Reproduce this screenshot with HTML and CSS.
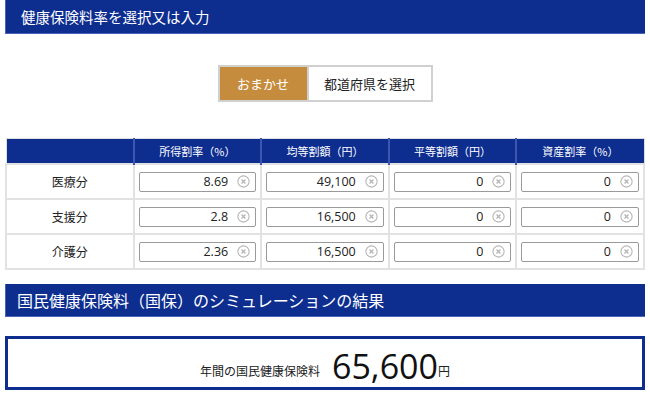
FILE: index.html
```html
<!DOCTYPE html>
<html>
<head>
    <meta charset="utf-8">
    <title>国民健康保険料シミュレーション</title>
    <link rel="stylesheet" href="styles.css">
</head>
<body>
    <h2 class="section-title">健康保険料率を選択又は入力</h2>

    <div class="mode-switch">
        <button class="mode-btn active">おまかせ</button>
        <button class="mode-btn">都道府県を選択</button>
    </div>

    <table class="rate-table">
        <thead>
            <tr>
                <th></th>
                <th>所得割率（%）</th>
                <th>均等割額（円）</th>
                <th>平等割額（円）</th>
                <th>資産割率（%）</th>
            </tr>
        </thead>
        <tbody id="rateBody">
            <!-- rows are filled in by the script below -->
        </tbody>
    </table>

    <h2 class="section-title result-title">国民健康保険料（国保）のシミュレーションの結果</h2>

    <div class="result-box">
        <span class="result-label">年間の国民健康保険料</span>
        <span class="result-value">65,600</span><span class="result-unit">円</span>
    </div>

    <script>
        var rows = [
            { name: '医療分', values: ['8.69', '49,100', '0', '0'] },
            { name: '支援分', values: ['2.8', '16,500', '0', '0'] },
            { name: '介護分', values: ['2.36', '16,500', '0', '0'] }
        ];

        var clearIcon = '<svg class="clear-icon" viewBox="0 0 12 12" width="13" height="13">' +
                        '<circle cx="6" cy="6" r="5.2" fill="none" stroke="#b5b5b5" stroke-width="1"/>' +
                        '<path d="M4.2 4.2 L7.8 7.8 M7.8 4.2 L4.2 7.8" stroke="#b5b5b5" stroke-width="1.2"/>' +
                        '</svg>';

        var body = document.getElementById('rateBody');
        rows.forEach(function (row) {
            var tr = document.createElement('tr');
            var html = '<td class="row-label">' + row.name + '</td>';
            row.values.forEach(function (v) {
                html += '<td><div class="rate-input"><input type="text" value="' + v + '">' + clearIcon + '</div></td>';
            });
            tr.innerHTML = html;
            body.appendChild(tr);
        });
    </script>
</body>
</html>
```

FILE: styles.css
```css
body {
    font-family: "Open Sans", "Noto Sans CJK JP", sans-serif;
    margin: 0;
    padding: 0 5px;
    background-color: #fff;
    color: #222;
}

.section-title {
    margin: 0;
    height: 34px;
    line-height: 33px;
    padding-left: 15px;
    background-color: #0d2d8f;
    border-left: 1px solid #4a62b8;
    border-bottom: 1px solid #4a62b8;
    box-sizing: border-box;
    color: #fff;
    font-size: 14.5px;
    font-weight: normal;
    font-family: "Noto Sans CJK JP", sans-serif;
}

.result-title {
    margin-top: 14px;
    height: 33px;
    padding-left: 11px;
    font-size: 16px;
}

.mode-switch {
    display: flex;
    justify-content: center;
    margin-top: 31px;
}

.mode-btn {
    height: 37px;
    border: 2px solid #d0d0d0;
    background-color: #fff;
    color: #222;
    font-family: "Noto Sans CJK JP", sans-serif;
    font-size: 13px;
    padding: 0;
    cursor: pointer;
}

.mode-btn.active {
    width: 89px;
    background-color: #c68c3d;
    color: #fff;
    border-right: none;
}

.mode-btn + .mode-btn {
    width: 126px;
}

.rate-table {
    width: 640px;
    margin-top: 36px;
    border-collapse: collapse;
    table-layout: fixed;
    border: 1px solid #ddd;
}

.rate-table th {
    height: 24px;
    padding: 0;
    background-color: #0d2d8f;
    color: #fff;
    font-size: 11px;
    font-weight: normal;
    font-family: "Noto Sans CJK JP", sans-serif;
    border-left: 2px solid #3d56b0;
}

.rate-table th:first-child {
    border-left: none;
}

.rate-table td {
    height: 35px;
    padding: 0 4px;
    border: 2px solid #e2e2e2;
    box-sizing: border-box;
}

.row-label {
    text-align: center;
    font-size: 12px;
    font-family: "Noto Sans CJK JP", sans-serif;
}

.rate-input {
    display: flex;
    align-items: center;
    height: 20px;
    border: 1px solid #9a9a9a;
    border-radius: 2px;
    box-sizing: border-box;
    padding-right: 5px;
}

.rate-input input {
    flex-grow: 1;
    width: 0;
    border: none;
    outline: none;
    padding: 0 9px 0 0;
    text-align: right;
    font-family: "Open Sans", sans-serif;
    font-size: 12.5px;
    color: #222;
    background: transparent;
}

.clear-icon {
    flex-shrink: 0;
}

.result-box {
    margin-top: 19px;
    height: 54px;
    border: 3px solid #0d2d8f;
    box-sizing: border-box;
    display: flex;
    align-items: center;
    justify-content: center;
    padding-top: 6px;
}

.result-label {
    font-size: 12px;
    font-family: "Noto Sans CJK JP", sans-serif;
    margin-right: 12px;
    align-self: center;
    padding-top: 8px;
}

.result-value {
    font-size: 34px;
    line-height: 40px;
    color: #111;
}

.result-unit {
    font-size: 12px;
    font-family: "Noto Sans CJK JP", sans-serif;
    align-self: flex-end;
    padding-bottom: 8px;
}
```
